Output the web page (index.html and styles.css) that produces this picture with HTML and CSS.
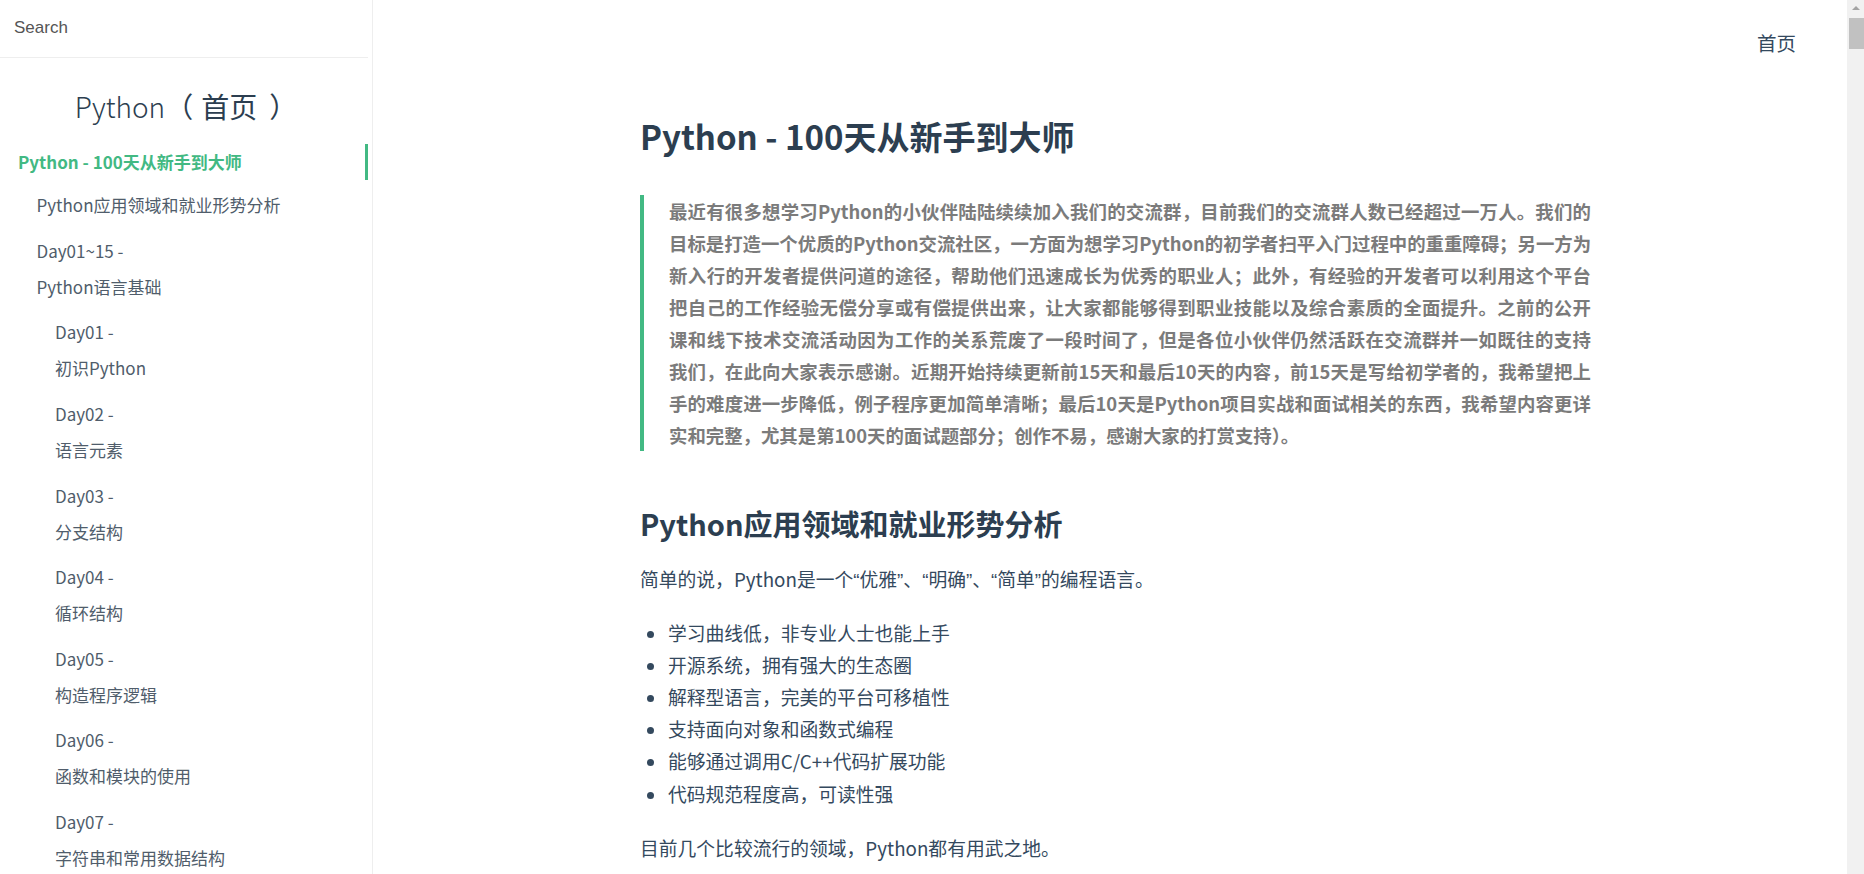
FILE: index.html
```html
<!DOCTYPE html>
<html lang="zh-CN">
<head>
  <meta charset="UTF-8">
  <title>Python - 100天从新手到大师</title>
  <link rel="stylesheet" href="styles.css">
</head>
<body>

<!-- SIDEBAR -->
<aside class="sidebar">
  <div class="search">
    <input type="search" placeholder="Search">
  </div>
  <h1 class="app-name">Python<span class="app-sub">（<span class="app-sub-text">首页</span>）</span></h1>

  <nav class="sidebar-nav">
    <ul>
      <li class="active"><a href="#">Python - 100天从新手到大师</a>
        <ul>
          <li><a href="#">Python应用领域和就业形势分析</a></li>
          <li><a href="#">Day01~15 -<br>Python语言基础</a>
            <ul>
              <li><a href="#">Day01 -<br>初识Python</a></li>
              <li><a href="#">Day02 -<br>语言元素</a></li>
              <li><a href="#">Day03 -<br>分支结构</a></li>
              <li><a href="#">Day04 -<br>循环结构</a></li>
              <li><a href="#">Day05 -<br>构造程序逻辑</a></li>
              <li><a href="#">Day06 -<br>函数和模块的使用</a></li>
              <li><a href="#">Day07 -<br>字符串和常用数据结构</a></li>
            </ul>
          </li>
        </ul>
      </li>
    </ul>
  </nav>
</aside>

<!-- CONTENT -->
<main class="content">
  <nav class="app-nav"><a href="#">首页</a></nav>

  <article class="markdown-section">
    <h1>Python - 100天从新手到大师</h1>

    <!-- lines kept as in the rendered original -->
    <blockquote>
      <strong>
        <span class="line">最近有很多想学习Python的小伙伴陆陆续续加入我们的交流群，目前我们的交流群人数已经超过一万人。我们的</span>
        <span class="line">目标是打造一个优质的Python交流社区，一方面为想学习Python的初学者扫平入门过程中的重重障碍；另一方为</span>
        <span class="line">新入行的开发者提供问道的途径，帮助他们迅速成长为优秀的职业人；此外，有经验的开发者可以利用这个平台</span>
        <span class="line">把自己的工作经验无偿分享或有偿提供出来，让大家都能够得到职业技能以及综合素质的全面提升。之前的公开</span>
        <span class="line">课和线下技术交流活动因为工作的关系荒废了一段时间了，但是各位小伙伴仍然活跃在交流群并一如既往的支持</span>
        <span class="line">我们，在此向大家表示感谢。近期开始持续更新前15天和最后10天的内容，前15天是写给初学者的，我希望把上</span>
        <span class="line">手的难度进一步降低，例子程序更加简单清晰；最后10天是Python项目实战和面试相关的东西，我希望内容更详</span>
        <span class="line">实和完整，尤其是第100天的面试题部分；创作不易，感谢大家的打赏支持）。</span>
      </strong>
    </blockquote>

    <h2>Python应用领域和就业形势分析</h2>
    <p>简单的说，Python是一个<q>优雅</q>、<q>明确</q>、<q>简单</q>的编程语言。</p>
    <ul>
      <li>学习曲线低，非专业人士也能上手</li>
      <li>开源系统，拥有强大的生态圈</li>
      <li>解释型语言，完美的平台可移植性</li>
      <li>支持面向对象和函数式编程</li>
      <li>能够通过调用C/C++代码扩展功能</li>
      <li>代码规范程度高，可读性强</li>
    </ul>
    <p>目前几个比较流行的领域，Python都有用武之地。</p>
  </article>
</main>

<!-- WINDOW SCROLLBAR -->
<div class="scrollbar">
  <span class="scroll-arrow"></span>
  <span class="scroll-thumb"></span>
</div>

</body>
</html>
```

FILE: styles.css
```css
/* --- Global --- */
html, body { height: 100%; }
body {
  margin: 0;
  display: flex;
  overflow: hidden;
  font-family: "Noto Sans CJK SC", "Noto Sans", sans-serif;
  color: #34495e;
  background: #fff;
}
a { text-decoration: none; color: inherit; }

/* --- Sidebar --- */
.sidebar {
  width: 372px;
  flex-shrink: 0;
  border-right: 1px solid #eee;
  overflow: hidden;
}
.search {
  height: 57px;
  margin-right: 4px;
  border-bottom: 1px solid #eee;
  display: flex;
  align-items: center;
}
.search input {
  border: none;
  outline: none;
  width: 100%;
  padding: 0 14px 2px;
  font-family: "Liberation Sans", Arial, sans-serif;
  font-size: 17px;
  color: #555;
  background: transparent;
}
.search input::placeholder { color: #555; }

.app-name {
  margin: 30px 0 0;
  text-align: center;
  font-size: 28px;
  line-height: 36px;
  font-weight: 300;
  color: #2c3e50;
}
.app-sub { font-weight: 400; }
.app-sub-text { padding: 0 12px 0 8px; }

.sidebar-nav { padding: 20px 4px 0 18px; }
.sidebar-nav ul { list-style: none; margin: 0; padding: 0; }
.sidebar-nav ul ul { padding-left: 18.5px; }
.sidebar-nav li { margin-top: 9.6px; }
.sidebar-nav > ul > li { margin-top: 0; }
.sidebar-nav .active > ul > li:first-child { margin-top: 7.2px; }
.sidebar-nav a {
  display: block;
  font-size: 17px;
  line-height: 36px;
  color: #505d6b;
}
.sidebar-nav .active > a {
  color: #42b983;
  font-weight: 600;
  border-right: 3px solid #42b983;
}

/* --- Content --- */
.content {
  flex: 1;
  min-width: 0;
  overflow: hidden;
}
.app-nav {
  display: flex;
  justify-content: flex-end;
  padding: 29px 51px 0 0;
  font-size: 19.5px;
  line-height: 28px;
  color: #34495e;
}

.markdown-section {
  max-width: 955px;
  margin: 57px 0 0 267px;
}
.markdown-section h1 {
  margin: 0;
  font-size: 33px;
  line-height: 44px;
  font-weight: 600;
  color: #2c3e50;
}
.markdown-section blockquote {
  width: 922px;
  margin: 37px 0 0;
  padding: 0 0 0 25px;
  border-left: 4px solid #42b983;
  font-size: 18.4px;
  line-height: 32px;
  color: #7b7b7b;
}
.markdown-section blockquote .line {
  display: block;
  white-space: nowrap;
  text-align: justify;
  text-align-last: justify;
}
.markdown-section blockquote .line:last-child { text-align-last: auto; }

.markdown-section h2 {
  margin: 54px 0 0;
  font-size: 29px;
  line-height: 36px;
  font-weight: 600;
  color: #2c3e50;
}
.markdown-section p {
  margin: 21.5px 0 0;
  font-size: 18.8px;
  line-height: 32px;
}
.markdown-section q { quotes: "“" "”"; }
.markdown-section q::before,
.markdown-section q::after { font-family: "Liberation Sans", sans-serif; }
.markdown-section ul {
  margin: 20px 0 0;
  padding-left: 28px;
  font-size: 18.8px;
  line-height: 32.2px;
}
.markdown-section ul + p { margin-top: 22px; }

/* --- Scrollbar --- */
.scrollbar {
  width: 17px;
  flex-shrink: 0;
  background: #f1f1f1;
  display: flex;
  flex-direction: column;
  align-items: flex-end;
}
.scroll-arrow {
  align-self: center;
  margin-top: 6px;
  width: 0;
  height: 0;
  border-left: 4px solid transparent;
  border-right: 4px solid transparent;
  border-bottom: 4px solid #a3a3a3;
}
.scroll-thumb {
  margin-top: 8px;
  width: 15px;
  height: 31px;
  background: #c1c1c1;
}
```
